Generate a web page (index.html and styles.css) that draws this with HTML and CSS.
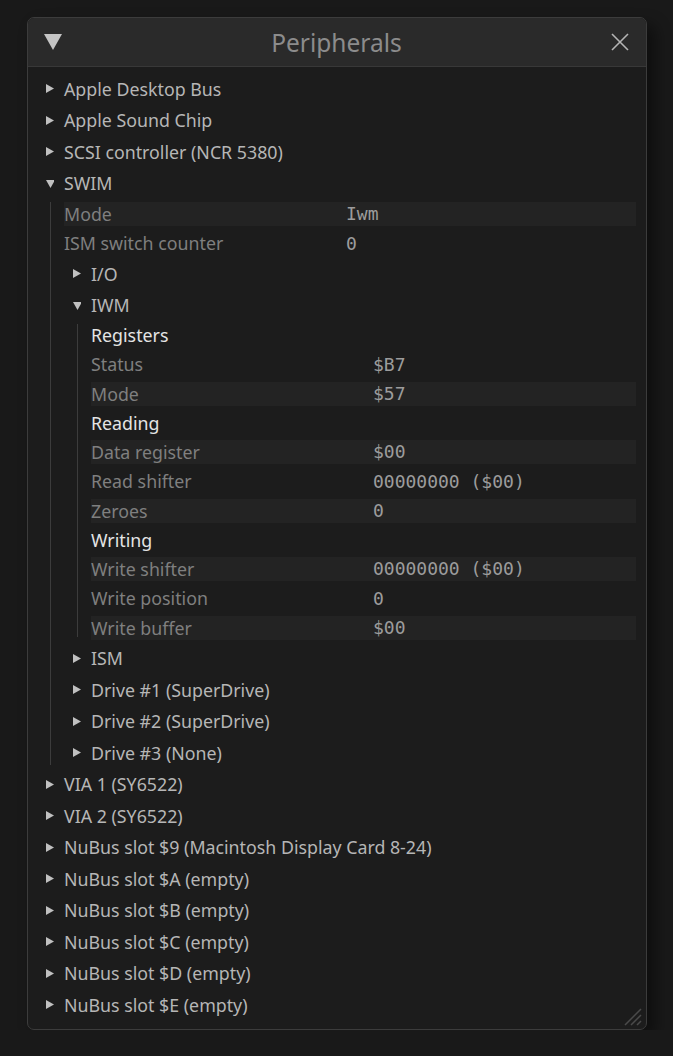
FILE: index.html
```html
<!DOCTYPE html>
<html>
<head>
<meta charset="utf-8">
<link rel="stylesheet" href="styles.css">
</head>
<body>
<div class="window">
  <div class="titlebar">
    <svg class="collapse" width="18" height="16" viewBox="0 0 18 16"><polygon points="0,0 18,0 9,16" fill="#c4c4c4"/></svg>
    <div class="title">Peripherals</div>
    <svg class="close" width="18" height="18" viewBox="0 0 18 18"><path d="M1 1 L17 17 M17 1 L1 17" stroke="#b4b4b4" stroke-width="1.6"/></svg>
  </div>
  <div class="content">
    <div class="node"><svg class="arrow" viewBox="0 0 8 9"><polygon points="0,0 8,4.5 0,9"/></svg><span class="label">Apple Desktop Bus</span></div>
    <div class="node"><svg class="arrow" viewBox="0 0 8 9"><polygon points="0,0 8,4.5 0,9"/></svg><span class="label">Apple Sound Chip</span></div>
    <div class="node"><svg class="arrow" viewBox="0 0 8 9"><polygon points="0,0 8,4.5 0,9"/></svg><span class="label">SCSI controller (NCR 5380)</span></div>
    <div class="node"><svg class="arrow" viewBox="0 0 8 9"><polygon points="0,1 9,1 4.5,9"/></svg><span class="label">SWIM</span></div>
    <div class="children">
      <div class="table">
        <div class="trow striped"><span class="k">Mode</span><span class="v">Iwm</span></div>
        <div class="trow"><span class="k">ISM switch counter</span><span class="v">0</span></div>
      </div>
      <div class="node"><svg class="arrow" viewBox="0 0 8 9"><polygon points="0,0 8,4.5 0,9"/></svg><span class="label">I/O</span></div>
      <div class="node"><svg class="arrow" viewBox="0 0 8 9"><polygon points="0,1 9,1 4.5,9"/></svg><span class="label">IWM</span></div>
      <div class="children nested">
        <div class="table">
          <div class="thead">Registers</div>
          <div class="trow"><span class="k">Status</span><span class="v">$B7</span></div>
          <div class="trow striped"><span class="k">Mode</span><span class="v">$57</span></div>
          <div class="thead">Reading</div>
          <div class="trow striped"><span class="k">Data register</span><span class="v">$00</span></div>
          <div class="trow"><span class="k">Read shifter</span><span class="v">00000000 ($00)</span></div>
          <div class="trow striped"><span class="k">Zeroes</span><span class="v">0</span></div>
          <div class="thead">Writing</div>
          <div class="trow striped"><span class="k">Write shifter</span><span class="v">00000000 ($00)</span></div>
          <div class="trow"><span class="k">Write position</span><span class="v">0</span></div>
          <div class="trow striped"><span class="k">Write buffer</span><span class="v">$00</span></div>
        </div>
      </div>
      <div class="node"><svg class="arrow" viewBox="0 0 8 9"><polygon points="0,0 8,4.5 0,9"/></svg><span class="label">ISM</span></div>
      <div class="node"><svg class="arrow" viewBox="0 0 8 9"><polygon points="0,0 8,4.5 0,9"/></svg><span class="label">Drive #1 (SuperDrive)</span></div>
      <div class="node"><svg class="arrow" viewBox="0 0 8 9"><polygon points="0,0 8,4.5 0,9"/></svg><span class="label">Drive #2 (SuperDrive)</span></div>
      <div class="node"><svg class="arrow" viewBox="0 0 8 9"><polygon points="0,0 8,4.5 0,9"/></svg><span class="label">Drive #3 (None)</span></div>
    </div>
    <div class="node"><svg class="arrow" viewBox="0 0 8 9"><polygon points="0,0 8,4.5 0,9"/></svg><span class="label">VIA 1 (SY6522)</span></div>
    <div class="node"><svg class="arrow" viewBox="0 0 8 9"><polygon points="0,0 8,4.5 0,9"/></svg><span class="label">VIA 2 (SY6522)</span></div>
    <div class="node"><svg class="arrow" viewBox="0 0 8 9"><polygon points="0,0 8,4.5 0,9"/></svg><span class="label">NuBus slot $9 (Macintosh Display Card 8-24)</span></div>
    <div class="node"><svg class="arrow" viewBox="0 0 8 9"><polygon points="0,0 8,4.5 0,9"/></svg><span class="label">NuBus slot $A (empty)</span></div>
    <div class="node"><svg class="arrow" viewBox="0 0 8 9"><polygon points="0,0 8,4.5 0,9"/></svg><span class="label">NuBus slot $B (empty)</span></div>
    <div class="node"><svg class="arrow" viewBox="0 0 8 9"><polygon points="0,0 8,4.5 0,9"/></svg><span class="label">NuBus slot $C (empty)</span></div>
    <div class="node"><svg class="arrow" viewBox="0 0 8 9"><polygon points="0,0 8,4.5 0,9"/></svg><span class="label">NuBus slot $D (empty)</span></div>
    <div class="node"><svg class="arrow" viewBox="0 0 8 9"><polygon points="0,0 8,4.5 0,9"/></svg><span class="label">NuBus slot $E (empty)</span></div>
  </div>
  <svg class="grip" width="18" height="18" viewBox="0 0 18 18"><path d="M1 17 L17 1 M7 17 L17 7 M13 17 L17 13" stroke="#4a4a4a" stroke-width="1.5"/></svg>
</div>
</body>
</html>
```
FILE: styles.css
```css
html, body {
  margin: 0;
  padding: 0;
  background: #191919;
}
body {
  padding: 17px 0 0 27px;
  font-family: "Noto Sans", "DejaVu Sans", sans-serif;
}
.window {
  position: relative;
  width: 618px;
  height: 1011px;
  border: 1px solid #3c3c3c;
  border-radius: 7px;
  background: #1c1c1c;
  box-shadow: 8px 8px 16px rgba(0, 0, 0, 0.45);
  overflow: hidden;
}
.titlebar {
  height: 48px;
  border-bottom: 1px solid #383838;
  background: #2a2a2a;
  display: flex;
  align-items: center;
  padding: 0 17px 0 16px;
}
.collapse {
  flex: none;
}
.title {
  flex: 1;
  text-align: center;
  font-size: 24.5px;
  color: #8c8c8c;
}
.close {
  flex: none;
}
.content {
  padding: 6px 10px 0 18px;
  display: flex;
  flex-direction: column;
}
.node {
  height: 31.5px;
  display: flex;
  align-items: center;
  font-size: 17.8px;
  color: #b6b6b6;
}
.arrow {
  width: 8px;
  height: 9px;
  flex: none;
  fill: #c0c0c0;
  margin-right: 10px;
}
.children {
  position: relative;
  display: flex;
  flex-direction: column;
}
.children::before {
  content: "";
  position: absolute;
  left: 4px;
  top: 3px;
  bottom: 4px;
  width: 1px;
  background: #3c3c3c;
}
.children.nested {
  margin-left: 27px;
}
.children.nested::before {
  bottom: 6px;
}
.children > .node {
  padding-left: 27px;
}
.table {
  display: flex;
  flex-direction: column;
  padding-left: 18px;
}
.trow {
  height: 29.5px;
  display: flex;
  align-items: center;
  font-size: 17.8px;
  color: #7f7f7f;
  position: relative;
}
.trow.striped::after {
  content: "";
  position: absolute;
  left: 0;
  right: 0;
  top: 3px;
  bottom: 3px;
  background: #232323;
  z-index: 0;
}
.k, .v {
  position: relative;
  z-index: 1;
}
.k {
  width: 282px;
  flex: none;
}
.v {
  font-family: "DejaVu Sans Mono", monospace;
  font-size: 18px;
  color: #9c9c9c;
}
.thead {
  height: 28.5px;
  display: flex;
  align-items: center;
  font-size: 17.8px;
  color: #e4e4e4;
}
.grip {
  position: absolute;
  right: 4px;
  bottom: 3px;
}
```
